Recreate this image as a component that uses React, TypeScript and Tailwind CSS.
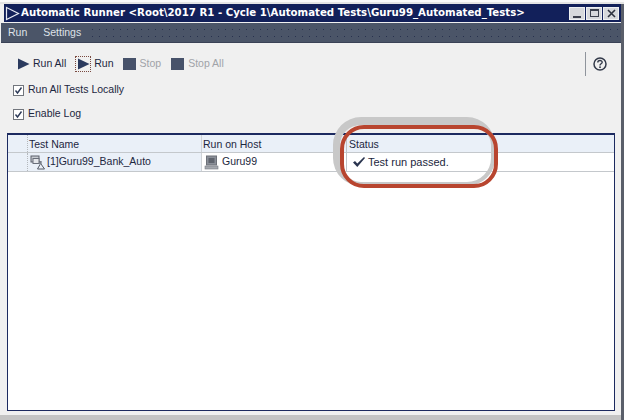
import React from "react";

const font = { fontFamily: '"Liberation Sans", Arial, sans-serif' };

const PlayIcon = ({ className = "" }: { className?: string }) => (
  <svg width="13" height="12" viewBox="0 0 13 12" className={className}>
    <path d="M1 0.5 L12.5 6 L1 11.5 Z" fill="#2b3a5e" />
  </svg>
);

const StopIcon = () => <div className="w-[13px] h-[12px] bg-[#47526a] shrink-0" />;

const CheckBox = ({ label }: { label: string }) => (
  <div className="flex items-center gap-[4px] h-[16px]">
    <div className="w-[11px] h-[11px] border border-[#71757c] bg-white flex items-center justify-center shrink-0">
      <svg width="9" height="9" viewBox="0 0 9 9">
        <path d="M1.5 4.5 L3.5 7 L7.5 1.5" fill="none" stroke="#2d3a58" strokeWidth="1.4" />
      </svg>
    </div>
    <span className="text-[10.5px] text-[#1c2740]">{label}</span>
  </div>
);

const WinButton = ({ children }: { children: React.ReactNode }) => (
  <div className="w-[16px] h-[13px] bg-[#d6d8dc] border border-[#eef0f2] flex items-center justify-center">
    {children}
  </div>
);

const App = () => {
  return (
    <div className="relative w-[624px] h-[420px] overflow-hidden bg-[#f0f0f0] flex flex-col" style={font}>
      <div className="h-[4px] bg-[#e4e4e4] border-t-2 border-[#fafafa] shrink-0" />

      <div className="flex flex-1 min-h-0">
        <div className="flex-1 min-w-0 flex flex-col">
          {/* Title bar */}
          <div className="h-[18px] ml-[4px] bg-[#12205a] flex items-center pl-[1px] pr-[2px] shrink-0">
            <svg width="15" height="15" viewBox="0 0 15 15" className="shrink-0">
              <path d="M1.5 1.5 L13.5 7.5 L1.5 13.5 Z" fill="none" stroke="#e6e9f2" strokeWidth="1.2" />
            </svg>
            <span className="ml-[1px] flex-1 min-w-0 text-[10.2px] font-bold text-white whitespace-nowrap" style={{ fontFamily: '"DejaVu Sans", sans-serif' }}>
              {"Automatic Runner <Root\\2017 R1 - Cycle 1\\Automated Tests\\Guru99_Automated_Tests>"}
            </span>
            <div className="flex gap-[1px] shrink-0">
              <WinButton>
                <div className="w-[8px] h-[2px] bg-[#3a3f4c] mt-[8px]" />
              </WinButton>
              <WinButton>
                <div className="w-[9px] h-[8px] border border-[#3a3f4c] border-t-2" />
              </WinButton>
              <WinButton>
                <svg width="9" height="9" viewBox="0 0 9 9">
                  <path d="M1 1 L8 8 M8 1 L1 8" stroke="#2d3240" strokeWidth="1.6" />
                </svg>
              </WinButton>
            </div>
          </div>

          {/* Menu bar */}
          <div className="h-[20px] mt-[1px] ml-[1px] bg-[#4b5568] flex items-center pl-[7px] text-[10.5px] text-[#dfe2e8] shrink-0 border-b border-[#3a4256]">
            <span>Run</span>
            <span className="ml-[16px]">Settings</span>
            <div className="flex-1 h-[14px] ml-[8px] bg-[radial-gradient(circle,#27314e_0.6px,transparent_0.8px)] bg-[length:7px_7px]" />
          </div>

          {/* Toolbar */}
          <div className="flex items-center justify-between h-[26px] mt-[8px] pl-[17px] pr-[13px] shrink-0">
            <div className="flex items-center text-[10.5px]">
              <PlayIcon />
              <span className="ml-[3px] text-[#1c2740]">Run All</span>
              <div className="ml-[9px] w-[16px] h-[16px] border border-dotted border-[#7a4a40] flex items-center justify-center">
                <PlayIcon />
              </div>
              <span className="ml-[3px] text-[#1c2740]">Run</span>
              <div className="ml-[9px]"><StopIcon /></div>
              <span className="ml-[4px] text-[#a0a3a8]">Stop</span>
              <div className="ml-[10px]"><StopIcon /></div>
              <span className="ml-[4px] text-[#a0a3a8]">Stop All</span>
            </div>
            <div className="flex items-center gap-[6px]">
              <div className="w-px h-[24px] bg-[#8f949c]" />
              <svg width="16" height="16" viewBox="0 0 16 16">
                <circle cx="8" cy="8" r="6" fill="none" stroke="#333a4a" strokeWidth="1.5" />
                <path d="M5.8 6.4 C5.8 3.9 10.2 3.9 10.2 6.3 C10.2 7.8 8 7.8 8 9.4" fill="none" stroke="#333a4a" strokeWidth="1.4" />
                <rect x="7.2" y="10.4" width="1.6" height="1.6" fill="#333a4a" />
              </svg>
            </div>
          </div>

          {/* Options */}
          <div className="flex flex-col gap-[8px] pl-[13px] mt-[5px] shrink-0">
            <CheckBox label="Run All Tests Locally" />
            <CheckBox label="Enable Log" />
          </div>

          {/* Table */}
          <div className="ml-[7px] mr-[6px] mt-[11px] flex-1 min-h-0 bg-white border border-[#1c2a60] border-t-2 text-[10.5px] text-[#1c2740]">
            <div className="flex h-[18px] bg-[#eaf0f8] border-b border-[#c4c8cc]">
              <div className="w-[20px] border-r border-dotted border-[#b4b8bc]" />
              <div className="w-[174px] border-r border-[#d0d4d8] pl-[1px] leading-[18px]">Test Name</div>
              <div className="w-[145px] border-r border-[#c0c4c8] pl-[1px] leading-[18px]">Run on Host</div>
              <div className="flex-1 pl-[2px] leading-[18px]">Status</div>
            </div>
            <div className="flex h-[19px] border-b border-[#c4c8cc] items-stretch">
              <div className="w-[20px] bg-[#eaf0f8] border-r border-dotted border-[#b4b8bc]" />
              <div className="w-[174px] bg-[#eaf0f8] border-r border-[#d0d4d8] flex items-center pl-[2px]">
                <svg width="16" height="15" viewBox="0 0 16 15" className="shrink-0">
                  <rect x="1" y="1" width="8" height="6" fill="#c8ccd2" stroke="#5a5f6a" />
                  <rect x="3" y="3.5" width="6" height="5" fill="#e4e6ea" stroke="#6a6f7a" />
                  <path d="M11 6 L11 9 L14.5 14 L7.5 14 L10 9.5 L10 6" fill="none" stroke="#555a66" />
                </svg>
                <span className="ml-[1px]">[1]Guru99_Bank_Auto</span>
              </div>
              <div className="w-[145px] border-r border-[#c0c4c8] flex items-center pl-[2px]">
                <svg width="15" height="15" viewBox="0 0 15 15" className="shrink-0">
                  <rect x="2.5" y="1" width="10" height="9" fill="#8a8f98" stroke="#6c7078" />
                  <rect x="4.5" y="3" width="6" height="5" fill="#5f646e" />
                  <rect x="1" y="11" width="13" height="3" fill="#a4a8ae" stroke="#777b84" strokeWidth="0.6" />
                </svg>
                <span className="ml-[3px]">Guru99</span>
              </div>
              <div className="flex-1 flex items-center pl-[5px] text-[11px]">
                <svg width="14" height="12" viewBox="0 0 14 12" className="shrink-0">
                  <path d="M1 6.5 L3 5 L5.3 7.5 L12 1 L13 2 L5.3 11 Z" fill="#2b3550" />
                </svg>
                <span className="ml-[2px]">Test run passed.</span>
              </div>
            </div>
          </div>

          <div className="h-[4px] bg-[#f0f0f0] shrink-0" />
          <div className="h-[5px] bg-[#c4c4c4] shrink-0" />
        </div>

        {/* Right window edge */}
        <div className="w-[3px] bg-[#5a5f6a] shrink-0" />
      </div>

      {/* Red highlight drawn over the status column */}
      <div className="absolute left-[333px] top-[117px] w-[162px] h-[69px] rounded-[28px] border-t-[8px] border-l-[7px] border-r-[4px] border-b-[4px] border-[#c8c8c8]" />
      <div className="absolute left-[340px] top-[125px] w-[158px] h-[63px] rounded-[24px] border-[4px] border-[#b8452f]" />
    </div>
  );
};

export default App;
